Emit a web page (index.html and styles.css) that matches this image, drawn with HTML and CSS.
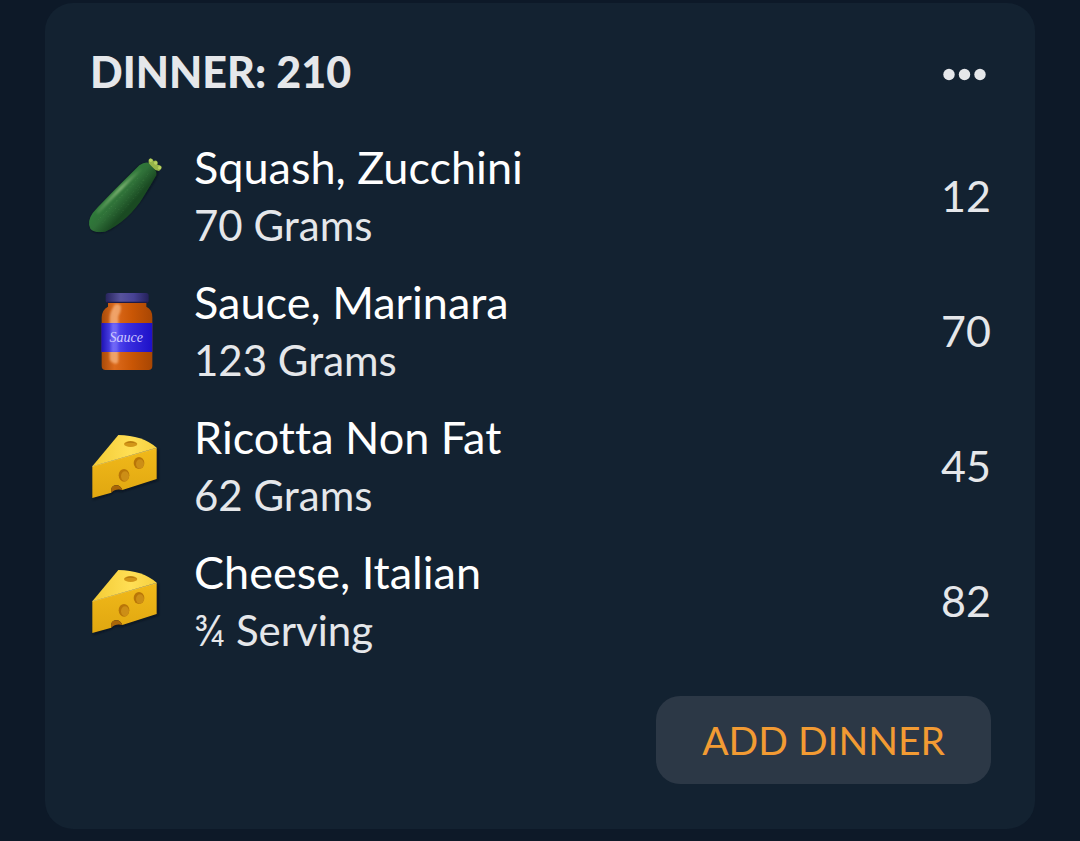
FILE: index.html
```html
<!DOCTYPE html>
<html lang="en">
<head>
    <meta charset="UTF-8">
    <meta name="viewport" content="width=device-width, initial-scale=1">
    <title>Dinner</title>
    <link rel="stylesheet" href="styles.css">
</head>
<body>
    <!-- shared icon gradients and the cheese symbol -->
    <svg class="defs" width="0" height="0" aria-hidden="true">
        <defs>
            <linearGradient id="skin" gradientUnits="userSpaceOnUse" x1="92" y1="122" x2="155" y2="178">
                <stop offset="0" stop-color="#1f5a2b"/>
                <stop offset="0.2" stop-color="#2f7a3a"/>
                <stop offset="0.55" stop-color="#2f7038"/>
                <stop offset="1" stop-color="#1a4a22"/>
            </linearGradient>
            <linearGradient id="shine" gradientUnits="userSpaceOnUse" x1="50" y1="215" x2="180" y2="80">
                <stop offset="0" stop-color="#8fbf7f" stop-opacity="0.1"/>
                <stop offset="0.6" stop-color="#8fbf7f" stop-opacity="0.8"/>
                <stop offset="1" stop-color="#8fbf7f" stop-opacity="0.1"/>
            </linearGradient>
            <linearGradient id="glass">
                <stop offset="0" stop-color="#a84a08"/>
                <stop offset="0.25" stop-color="#dc6a1c"/>
                <stop offset="0.6" stop-color="#c95605"/>
                <stop offset="1" stop-color="#a84603"/>
            </linearGradient>
            <linearGradient id="paper">
                <stop offset="0" stop-color="#1c12b4"/>
                <stop offset="0.24" stop-color="#5a50f4"/>
                <stop offset="0.5" stop-color="#3a2fe0"/>
                <stop offset="1" stop-color="#1d10c8"/>
            </linearGradient>
            <linearGradient id="lid">
                <stop offset="0" stop-color="#27245c"/>
                <stop offset="0.35" stop-color="#57539c"/>
                <stop offset="0.65" stop-color="#474294"/>
                <stop offset="1" stop-color="#24215a"/>
            </linearGradient>
            <linearGradient id="rind" x1="0" y1="0" x2="0" y2="1">
                <stop offset="0" stop-color="#f1b91a"/>
                <stop offset="1" stop-color="#e0a710"/>
            </linearGradient>
            <linearGradient id="cheeseTop">
                <stop offset="0" stop-color="#f3cb35"/>
                <stop offset="0.6" stop-color="#ffdf55"/>
                <stop offset="1" stop-color="#f6d040"/>
            </linearGradient>
            <filter id="soft" x="-20%" y="-20%" width="140%" height="140%">
                <feGaussianBlur stdDeviation="3"/>
            </filter>
        </defs>
        <symbol id="cheese" viewBox="30 3 216 240">
            <path d="M40 224 L92 207 Q106 194 124 200 L235 166 V72 L44 128 Z" fill="#070f18" opacity="0.7" filter="url(#soft)"/>
            <path d="M37 124 L230 69 V162 L127 195 Q121 179 106 181 Q91 184 94 203 L37 219 Z" fill="url(#rind)"/>
            <path d="M37 124 L115 30 Q187 31 230 68 Z" fill="url(#cheeseTop)"/>
            <path d="M37 124 L230 69" stroke="#ffe47c" stroke-width="2" opacity="0.7"/>
            <path d="M94 203 Q90 184 106 181 Q121 179 127 195 Q107 190 94 203 Z" fill="#a96608"/>
            <ellipse cx="152" cy="57" rx="20" ry="9" fill="#d39718"/>
            <path d="M133 56 Q151 41 171 56 Q151 50 133 56 Z" fill="#b77b10"/>
            <ellipse cx="177" cy="114" rx="16" ry="18" fill="#b87508"/>
            <ellipse cx="180" cy="117" rx="12" ry="14" fill="#cc8e16"/>
            <ellipse cx="132" cy="151" rx="16" ry="19" fill="#b87508"/>
            <ellipse cx="135" cy="154" rx="12" ry="15" fill="#cc8e16"/>
        </symbol>
    </svg>

    <main class="card">
        <header class="card-header">
            <h1 class="card-title">DINNER: 210</h1>
            <button type="button" class="more" aria-label="More options">
                <svg width="54" height="52" viewBox="0 0 54 52" aria-hidden="true">
                    <circle cx="12" cy="26.5" r="5.7"/>
                    <circle cx="27.5" cy="26.5" r="5.7"/>
                    <circle cx="43" cy="26.5" r="5.7"/>
                </svg>
            </button>
        </header>

        <ul class="foods">
            <li class="food">
                <svg class="food-icon" viewBox="30 33 216 240" aria-hidden="true">
                    <path d="M192 56 Q184 58 177 64 Q120 118 43 203 Q20 231 36 256 Q51 270 91 254 C130 228 168 190 197 148 Q222 112 232 91 Q237 80 229 72 Z" fill="#070f18" opacity="0.7" filter="url(#soft)"/>
                    <path d="M206 52 Q204 42 212 40 Q219 42 221 49 Q225 44 231 48 Q235 53 232 59 Q241 59 245 65 Q245 74 237 78 Q220 76 206 60 Z" fill="#96b548"/>
                    <g fill="#b9d162">
                        <circle cx="212" cy="46" r="5"/>
                        <circle cx="227" cy="54" r="5"/>
                        <circle cx="239" cy="68" r="5"/>
                    </g>
                    <path d="M205 53 Q193 50 178 61 C130 108 80 158 38 204 Q20 230 31 251 Q42 265 76 260 C119 240 162 204 192 153 Q213 119 229 91 Q231 79 223 72 Q214 63 205 53 Z" fill="url(#skin)"/>
                    <path d="M180 75 Q128 122 54 201" fill="none" stroke="url(#shine)" stroke-width="10" stroke-linecap="round" filter="url(#soft)"/>
                    <path d="M174 99 L70 209 M190 104 L99 215 M190 125 L122 205 M160 118 L53 226 M204 86 L169 143 M107 190 L61 241" fill="none" stroke="#60a05b" stroke-width="2" stroke-dasharray="3 7 2 11" opacity="0.4"/>
                </svg>
                <div class="food-text">
                    <span class="food-name">Squash, Zucchini</span>
                    <span class="food-amount">70 Grams</span>
                </div>
                <span class="food-calories">12</span>
            </li>
            <li class="food">
                <svg class="food-icon" viewBox="15 33 216 240" aria-hidden="true">
                    <path d="M69 66 H184 V80 Q202 88 202 112 V258 Q202 270 190 270 H62 Q50 270 50 258 V112 Q51 89 69 80 Z" fill="url(#glass)"/>
                    <path d="M91 73 Q107 68 108 84 Q108 96 100 109 V242 Q99 254 87 250 Q74 246 74 235 V112 Q76 92 91 73 Z" fill="#ffc99b" opacity="0.6" filter="url(#soft)"/>
                    <rect x="49" y="129" width="153" height="87" fill="url(#paper)"/>
                    <rect x="78" y="129" width="21" height="87" fill="#a39dff" opacity="0.3" filter="url(#soft)"/>
                    <rect x="62" y="39" width="129" height="30" rx="8" fill="url(#lid)"/>
                    <path d="M65 67 H188" stroke="#201a45" stroke-width="4"/>
                    <text class="jar-label" x="124" y="186" text-anchor="middle">Sauce</text>
                </svg>
                <div class="food-text">
                    <span class="food-name">Sauce, Marinara</span>
                    <span class="food-amount">123 Grams</span>
                </div>
                <span class="food-calories">70</span>
            </li>
            <li class="food">
                <svg class="food-icon" aria-hidden="true"><use href="#cheese"/></svg>
                <div class="food-text">
                    <span class="food-name">Ricotta Non Fat</span>
                    <span class="food-amount">62 Grams</span>
                </div>
                <span class="food-calories">45</span>
            </li>
            <li class="food">
                <svg class="food-icon" aria-hidden="true"><use href="#cheese"/></svg>
                <div class="food-text">
                    <span class="food-name">Cheese, Italian</span>
                    <span class="food-amount">¾ Serving</span>
                </div>
                <span class="food-calories">82</span>
            </li>
        </ul>

        <button type="button" class="add">ADD DINNER</button>
    </main>
</body>
</html>
```
FILE: styles.css
```css
* {
    box-sizing: border-box;
}
body {
    margin: 0;
    padding: 3px 45px 12px;
    background: #0d1928;
    color: #e5e7ea;
    font-family: Lato, "Open Sans", sans-serif;
    font-variant-ligatures: none;
}
.defs {
    position: absolute;
}
.card {
    display: flex;
    flex-direction: column;
    padding: 45px 44px 45px 45px;
    background: #132231;
    border-radius: 28px;
}
.card-header {
    display: flex;
    justify-content: space-between;
    align-items: flex-start;
    margin-bottom: 28px;
}
.card-title {
    margin: 0;
    font-size: 43px;
    line-height: 48px;
    font-weight: 900;
}
button {
    border: none;
    font-family: inherit;
    cursor: pointer;
}
.more {
    padding: 0;
    background: none;
}
.more svg {
    display: block;
    fill: #e5e7ea;
}
.foods {
    margin: 0 0 28px;
    padding: 0;
    list-style: none;
}
.food {
    display: flex;
    align-items: center;
    height: 135px;
}
.food-icon {
    width: 72px;
    height: 80px;
    margin-right: 32px;
    overflow: visible;
}
.jar-label {
    font-family: "Liberation Serif", serif;
    font-size: 42px;
    font-style: italic;
    fill: #cfcaff;
}
.food-text {
    display: flex;
    flex: 1;
    flex-direction: column;
    line-height: 58px;
}
.food-name {
    color: #fff;
    font-size: 45px;
}
.food-amount {
    font-size: 42px;
}
.food-calories {
    font-size: 43px;
}
.add {
    align-self: flex-end;
    height: 88px;
    padding: 0 46px;
    background: #2c3846;
    border-radius: 24px;
    color: #f29b33;
    font-size: 39px;
}
```
